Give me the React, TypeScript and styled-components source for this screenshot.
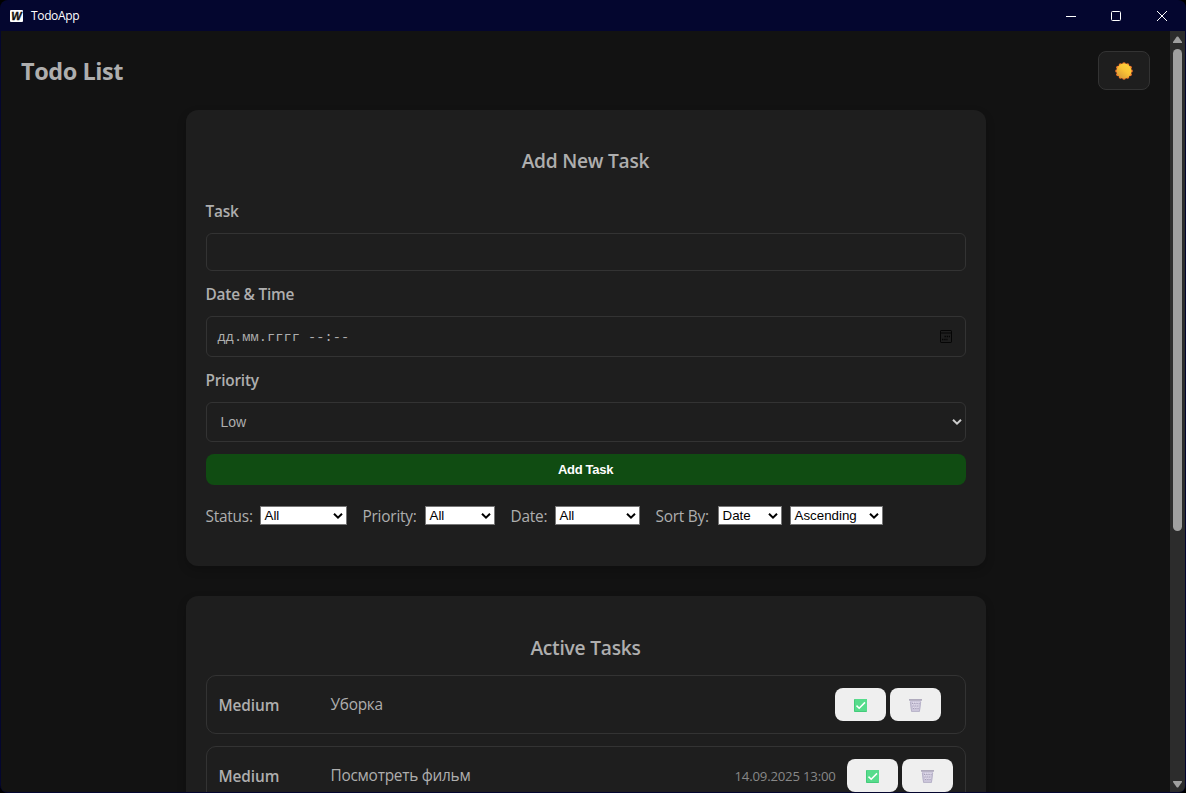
import React from "react";
import styled, { createGlobalStyle } from "styled-components";

const GlobalStyle = createGlobalStyle`
  * { box-sizing: border-box; }
  html, body { margin: 0; background: #000; overflow: hidden; }
  body { font-family: "Open Sans", "Noto Sans", sans-serif; color: #aeaeae; }
`;

const Window = styled.div`
  width: 1186px;
  height: 793px;
  display: flex;
  flex-direction: column;
  background: #04062f;
  border-radius: 8px;
  overflow: hidden;
`;

const TitleBar = styled.header`
  flex: 0 0 31px;
  display: flex;
  align-items: center;
  padding: 0 1px 0 10px;
  color: #fff;
`;

const AppName = styled.span`
  margin-left: 8px;
  font-size: 12px;
  line-height: 16px;
  letter-spacing: -0.35px;
  flex: 1;
`;

const WindowButton = styled.span`
  width: 46px;
  height: 31px;
  display: flex;
  align-items: center;
  justify-content: center;
`;

const Viewport = styled.div`
  flex: 1;
  min-height: 0;
  display: flex;
  margin: 0 1px 1px;
  background: #121212;
  border-radius: 0 0 6px 6px;
  overflow: hidden;
`;

const Page = styled.main`
  flex: 1;
  min-width: 0;
  overflow: hidden;
  padding: 20px;
`;

const ScrollTrack = styled.div`
  width: 15px;
  background: #2c2c2c;
  display: flex;
  flex-direction: column;
  align-items: center;
  padding: 5px 0 4px;
`;

const ScrollThumb = styled.div`
  width: 9px;
  height: 482px;
  margin: 5px 0 auto;
  border-radius: 5px;
  background: #9f9f9f;
`;

const PageHeader = styled.div`
  height: 39px;
  display: flex;
  align-items: center;
  justify-content: space-between;
  margin-bottom: 20px;
`;

const PageTitle = styled.h1`
  margin: 0;
  font-size: 23.5px;
  line-height: 32px;
  font-weight: 700;
  letter-spacing: -0.45px;
`;

const ThemeButton = styled.button`
  width: 52px;
  height: 39px;
  padding: 0 1px 0 0;
  display: flex;
  align-items: center;
  justify-content: center;
  background: #1e1e1e;
  border: 1px solid #333;
  border-radius: 8px;
`;

const Card = styled.section`
  width: 800px;
  height: 456px;
  margin: 0 auto 30px;
  padding: 20px;
  border-radius: 12px;
  background: #1e1e1e;
  box-shadow: 0 4px 10px rgba(0, 0, 0, 0.2);
`;

const CardTitle = styled.h2<{ $before: number; $after: number }>`
  margin: ${(p) => p.$before}px 0 ${(p) => p.$after}px;
  font-size: 19.2px;
  line-height: 26px;
  font-weight: 600;
  text-align: center;
  letter-spacing: -0.24px;
`;

const Form = styled.form`
  display: flex;
  flex-direction: column;
`;

const FieldLabel = styled.label`
  font-size: 15.4px;
  line-height: 24px;
  font-weight: 600;
  letter-spacing: -0.22px;
  margin-bottom: 9px;
`;

const Field = styled.div<{ $height: number; $pad: string }>`
  height: ${(p) => p.$height}px;
  padding: ${(p) => p.$pad};
  margin-bottom: 12px;
  display: flex;
  align-items: center;
  justify-content: space-between;
  border: 1px solid #333;
  border-radius: 6px;
  font-family: "Liberation Sans", sans-serif;
  font-size: 14px;
`;

const DateText = styled.span`
  padding-top: 2px;
  font-family: "Liberation Mono", monospace;
  font-size: 13.6px;
  letter-spacing: 0.08px;
  white-space: pre;
`;

const SubmitButton = styled.button`
  height: 31px;
  padding: 0;
  border: 0;
  border-radius: 8px;
  background: #104c12;
  color: #fff;
  font: 700 13px "Liberation Sans", sans-serif;
  letter-spacing: -0.3px;
`;

const Filters = styled.div`
  display: flex;
  align-items: flex-start;
  margin-top: 20px;
`;

const FilterLabel = styled.span<{ $width: number }>`
  width: ${(p) => p.$width}px;
  font-size: 15.4px;
  line-height: 24px;
  letter-spacing: -0.22px;
  white-space: nowrap;
`;

const Select = styled.span<{ $width: number; $gap?: number }>`
  width: ${(p) => p.$width}px;
  height: 19px;
  margin: 1px ${(p) => p.$gap ?? 16}px 0 0;
  padding: 0 3px 0 4px;
  display: flex;
  align-items: center;
  justify-content: space-between;
  background: #fff;
  border: 1px solid #767676;
  color: #000;
  font: 13.33px "Liberation Sans", sans-serif;
`;

const TaskItem = styled.article<{ $inset: number }>`
  height: 59px;
  margin-bottom: 12px;
  padding: 0 ${(p) => p.$inset}px 0 12px;
  display: flex;
  align-items: center;
  border: 1px solid #333;
  border-radius: 10px;
`;

const TaskPriority = styled.span`
  width: 112px;
  padding-top: 2px;
  font-size: 15.4px;
  line-height: 22px;
  font-weight: 600;
  letter-spacing: -0.1px;
`;

const TaskTitle = styled.span`
  flex: 1;
  font-size: 15.4px;
  line-height: 22px;
  letter-spacing: -0.25px;
`;

const TaskDate = styled.time`
  width: 112px;
  font-size: 13.2px;
  line-height: 20px;
  letter-spacing: -0.2px;
  color: #888;
  white-space: nowrap;
`;

const TaskActions = styled.div`
  display: flex;
  gap: 4px;
`;

const ActionButton = styled.button`
  width: 51px;
  height: 33px;
  padding: 2px 0 0;
  border: 0;
  border-radius: 8px;
  background: #efefef;
  display: flex;
  align-items: center;
  justify-content: center;
`;

const Logo = styled.span`
  width: 13px;
  height: 12px;
  border-radius: 1px;
  background: #fff;
  color: #111;
  font: italic 900 11px/12px "Liberation Sans", sans-serif;
  -webkit-text-stroke: 0.4px #111;
  text-align: center;
`;

const Chevron = ({ color = "#000" }: { color?: string }) => (
  <svg width="10" height="8" viewBox="0 0 10 8" fill="none" stroke={color} strokeWidth="2">
    <path d="M1 1.7 5 5.6 9 1.7" />
  </svg>
);

const Sun = () => {
  const rays = Array.from({ length: 12 }, (_, i) => {
    const a = (i * Math.PI) / 6;
    return <circle key={i} cx={9 + 7 * Math.cos(a)} cy={9 + 7 * Math.sin(a)} r="1.8" fill="#f3792b" />;
  });
  return (
    <svg width="18" height="18" viewBox="0 0 18 18">
      <defs>
        <linearGradient id="sun" x1="1" y1="0" x2="0.2" y2="1">
          <stop offset="0" stopColor="#ffd83b" />
          <stop offset="0.5" stopColor="#fbc436" />
          <stop offset="1" stopColor="#d99a35" />
        </linearGradient>
      </defs>
      {rays}
      <circle cx="9" cy="9" r="7.4" fill="url(#sun)" />
    </svg>
  );
};

const Calendar = () => (
  <svg width="12" height="13" viewBox="0 0 12 13" fill="none" stroke="#050505">
    <rect x="0.5" y="0.5" width="11" height="12" rx="0.7" />
    <path d="M1 3H11" />
    <path d="M4.5 6.5H10M2 9.5H7.5" strokeWidth="1.4" strokeDasharray="1.4 0.8" />
  </svg>
);

const CheckMark = () => (
  <svg width="13" height="13" viewBox="0 0 13 13">
    <rect width="13" height="13" rx="0.8" fill="#44cb7b" />
    <rect x="1" width="12" height="12" rx="0.5" fill="#57dc8c" />
    <path d="M2.5 6.6 5.2 9.2 11 3.4" fill="none" stroke="#fff" strokeWidth="1.5" />
  </svg>
);

const Basket = () => (
  <svg width="13" height="13" viewBox="0 0 13 13">
    <path d="M0.8 1.5H12.2L10.9 12.6H2.1Z" fill="#cbc5da" />
    <path d="M0 0.9H13" stroke="#9b95ad" strokeWidth="1.3" />
    <path d="M1.3 3 2.6 12.5H10.4L11.7 3" fill="none" stroke="#b3adc4" strokeWidth="0.8" />
    <path d="M3 4.5H10.5M3.5 7H10M4 9.5H9.5" stroke="#a49eb5" strokeWidth="1.1" strokeDasharray="1 1.3" />
    <path d="M4 3.3H11M3 5.8H10M4 8.3H10" stroke="#e6e2ee" strokeWidth="1" strokeDasharray="1.2 1" />
  </svg>
);

const filters = [
  { label: "Status:", labelWidth: 54, value: "All", width: 87 },
  { label: "Priority:", labelWidth: 62, value: "All", width: 70 },
  { label: "Date:", labelWidth: 44, value: "All", width: 85 },
  { label: "Sort By:", labelWidth: 62, value: "Date", width: 64, gap: 8 },
];

const tasks = [
  { title: "Уборка", date: "", inset: 24 },
  { title: "Посмотреть фильм", date: "14.09.2025 13:00", inset: 12 },
];

export default function App() {
  return (
    <>
      <GlobalStyle />
      <Window>
        <TitleBar>
          <Logo>W</Logo>
          <AppName>TodoApp</AppName>
          <WindowButton>
            <svg width="12" height="10" stroke="#fff"><path d="M2 5.5H12" /></svg>
          </WindowButton>
          <WindowButton>
            <svg width="10" height="10" fill="none" stroke="#fff"><rect x="0.5" y="0.5" width="9" height="9" rx="1" /></svg>
          </WindowButton>
          <WindowButton>
            <svg width="10" height="10" stroke="#fff"><path d="M0 0 10 10M10 0 0 10" /></svg>
          </WindowButton>
        </TitleBar>
        <Viewport>
          <Page>
            <PageHeader>
              <PageTitle>Todo List</PageTitle>
              <ThemeButton aria-label="Theme"><Sun /></ThemeButton>
            </PageHeader>
            <Card>
              <CardTitle $before={18} $after={26}>Add New Task</CardTitle>
              <Form>
                <FieldLabel>Task</FieldLabel>
                <Field $height={38} $pad="0 10px" />
                <FieldLabel>Date &amp; Time</FieldLabel>
                <Field $height={41} $pad="0 13px 0 11px">
                  <DateText>дд.мм.гггг --:--</DateText>
                  <Calendar />
                </Field>
                <FieldLabel>Priority</FieldLabel>
                <Field $height={40} $pad="0 3px 0 14px">
                  Low
                  <Chevron color="#ccc" />
                </Field>
                <SubmitButton type="button">Add Task</SubmitButton>
              </Form>
              <Filters>
                {filters.map((f) => (
                  <React.Fragment key={f.label}>
                    <FilterLabel $width={f.labelWidth}>{f.label}</FilterLabel>
                    <Select $width={f.width} $gap={f.gap}>{f.value}<Chevron /></Select>
                  </React.Fragment>
                ))}
                <Select $width={93}>Ascending<Chevron /></Select>
              </Filters>
            </Card>
            <Card>
              <CardTitle $before={19} $after={14}>Active Tasks</CardTitle>
              {tasks.map((t) => (
                <TaskItem key={t.title} $inset={t.inset}>
                  <TaskPriority>Medium</TaskPriority>
                  <TaskTitle>{t.title}</TaskTitle>
                  {t.date && <TaskDate>{t.date}</TaskDate>}
                  <TaskActions>
                    <ActionButton aria-label="Complete"><CheckMark /></ActionButton>
                    <ActionButton aria-label="Delete"><Basket /></ActionButton>
                  </TaskActions>
                </TaskItem>
              ))}
            </Card>
          </Page>
          <ScrollTrack>
            <svg width="9" height="8" viewBox="0.5 0 9 8" fill="#9f9f9f"><path d="M4.2 0.8Q5 0 5.8 0.8L9.5 6Q9.8 7 8.8 7H1.2Q0.2 7 0.5 6Z" /></svg>
            <ScrollThumb />
            <svg width="9" height="8" viewBox="0.5 0 9 8" fill="#9f9f9f"><path d="M4.2 7.2Q5 8 5.8 7.2L9.5 2Q9.8 1 8.8 1H1.2Q0.2 1 0.5 2Z" /></svg>
          </ScrollTrack>
        </Viewport>
      </Window>
    </>
  );
}
